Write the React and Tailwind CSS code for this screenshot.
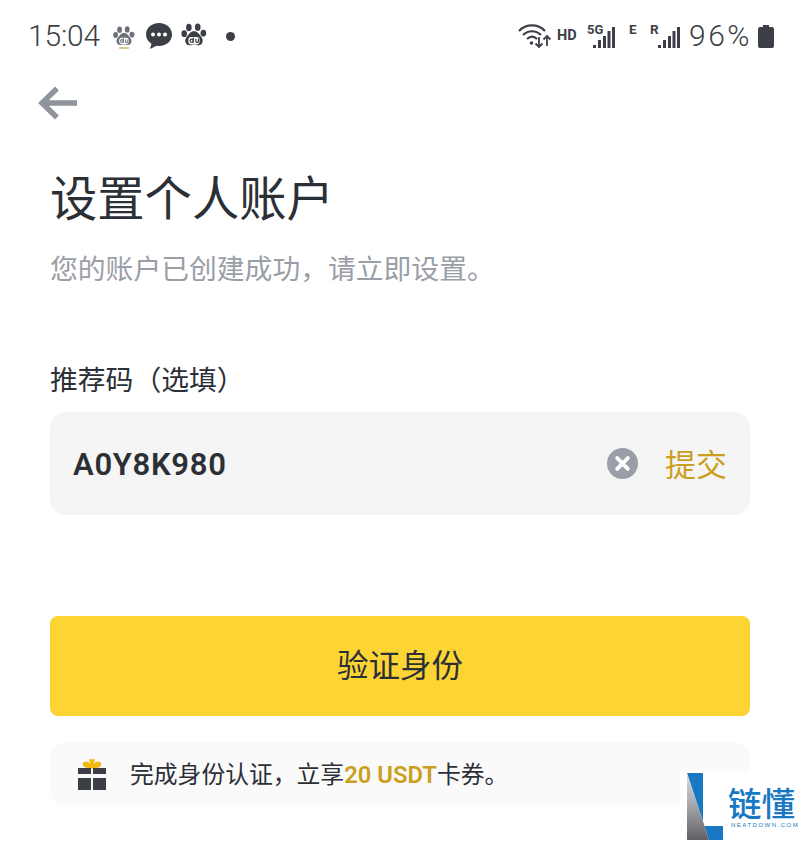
import React from "react";

const cjk = "font-['Noto_Sans_CJK_SC','Noto_Sans',sans-serif]";

function Paw({ size = 30, color = "#3c3f46", small = false }) {
    return (
        <svg width={size} height={size} viewBox="0 0 30 30" className="shrink-0">
            <ellipse cx="9.5" cy="6" rx="3" ry="4" fill={color} />
            <ellipse cx="19" cy="5.5" rx="3" ry="4" fill={color} />
            <ellipse cx="4.5" cy="12.5" rx="3" ry="3.6" fill={color} />
            <ellipse cx="25" cy="12" rx="3" ry="3.6" fill={color} />
            <path d="M15 10c4 0 5 3 7.500 5.500 3 3 2.500 9-2.500 9.500-2 .2-3.500-.6-5-.6s-3 .8-5 .6c-5-.5-5.500-6.500-2.500-9.500C10 13 11 10 15 10z" fill={color} />
            <rect x="9" y="16" width="12" height="8" rx="3" fill="#fff" />
            <circle cx="12.500" cy="20" r="1.700" fill="none" stroke={color} strokeWidth="1.300" />
            <path d="M14.200 16.500v5.500M17 18v2.500a1.400 1.400 0 0 0 2.800 0V18" fill="none" stroke={color} strokeWidth="1.300" />
            {small && <rect x="9" y="28" width="12" height="1.500" fill="#c9a24a" />}
        </svg>
    );
}

function Bars({ className = "" }) {
    return (
        <svg width="22" height="21" viewBox="0 0 22 21" className={className}>
            <rect x="0" y="18" width="3" height="3" fill="#3c3f46" />
            <rect x="5" y="13" width="3" height="8" fill="#3c3f46" />
            <rect x="10" y="9" width="3" height="12" fill="#3c3f46" />
            <rect x="14.500" y="4" width="3" height="17" fill="#3c3f46" />
            <rect x="19" y="0" width="3" height="21" fill="#3c3f46" />
        </svg>
    );
}

function StatusBar() {
    return (
        <div className="flex h-[70px] items-center justify-between pl-[28px] pr-[26px] pt-[2px] text-[#3c3f46] font-['Roboto',sans-serif]">
            <div className="flex items-center">
                <span className="text-[30px] leading-none font-[350] tracking-[-0.2px]">15:04</span>
                <div className="ml-[12px] mt-[2px] w-[24px]">
                    <Paw size={24} color="#6c7078" small />
                </div>
                <svg width="28" height="28" viewBox="0 0 28 28" className="ml-[9px]">
                    <path d="M14 1C6.500 1 1 6 1 12.500c0 4 2.200 7.300 5.500 9.300L5 27l6.500-3.200c.8.200 1.700.2 2.500.2 7.500 0 13-5 13-11.500S21.500 1 14 1z" fill="#3c3f46" />
                    <circle cx="8" cy="12.500" r="2" fill="#fff" />
                    <circle cx="14" cy="12.500" r="2" fill="#fff" />
                    <circle cx="20" cy="12.500" r="2" fill="#fff" />
                </svg>
                <div className="ml-[7px]">
                    <Paw size={28} />
                </div>
                <span className="ml-[18px] h-[9px] w-[9px] rounded-full bg-[#3c3f46]" />
            </div>
            <div className="flex items-center">
                <svg width="34" height="26" viewBox="0 0 34 26">
                    <path d="M1 8C8 .5 20 .5 27 8M5 12c5.500-5 12.500-5 18 0M9 16c3.500-3 7-3 10 0" fill="none" stroke="#3c3f46" strokeWidth="2.200" />
                    <circle cx="13.500" cy="20" r="1.800" fill="#3c3f46" />
                    <path d="M21 14v10M17.500 20.500l3.500 3.500 3.500-3.500M29 23V13M25.500 16.500l3.500-3.500 3.500 3.500" fill="none" stroke="#3c3f46" strokeWidth="1.800" />
                </svg>
                <span className="ml-[5px] mt-[1px] w-[20px] text-[14.500px] font-bold leading-none">HD</span>
                <div className="relative ml-[10px] h-[26px] w-[28px]">
                    <span className="absolute left-0 top-0 text-[13px] font-bold leading-none">5G</span>
                    <Bars className="absolute right-0 top-[4px]" />
                </div>
                <span className="ml-[14px] mb-[12px] w-[8px] text-[13.500px] font-bold leading-none">E</span>
                <span className="ml-[13px] mb-[12px] w-[9px] text-[13.500px] font-bold leading-none">R</span>
                <Bars className="mt-[3px] ml-[-1px]" />
                <span className="ml-[9px] text-[30px] font-[350] leading-none tracking-[2.500px]">96%</span>
                <svg width="16" height="23" viewBox="0 0 16 23" className="ml-[6px]">
                    <path d="M5 0h6v2h3a2 2 0 0 1 2 2v17a2 2 0 0 1-2 2H2a2 2 0 0 1-2-2V4a2 2 0 0 1 2-2h3z" fill="#3c3f46" />
                </svg>
            </div>
        </div>
    );
}

function Watermark() {
    return (
        <div className="absolute bottom-0 right-0 flex h-[70px] w-[120px] bg-white pl-[7px] pt-[1px]">
            <svg width="36" height="67" viewBox="0 0 36 67" className="shrink-0">
                <defs>
                    <linearGradient id="wedge" x1="0" y1="0" x2="0" y2="1">
                        <stop offset="0" stopColor="#dcdcde" />
                        <stop offset="0.45" stopColor="#a9abaf" />
                        <stop offset="1" stopColor="#5f6167" />
                    </linearGradient>
                </defs>
                <path d="M0 0h16v53h20v14H22z" fill="#1878c4" />
                <path d="M0 0l22 67H0z" fill="url(#wedge)" />
            </svg>
            <div className="ml-[5px] flex flex-col items-start">
                <span className={`${cjk} mt-[13px] text-[33.500px] font-medium leading-[32px] text-[#1878c4] whitespace-nowrap`}>链懂</span>
                <span className="ml-[3px] mt-[4px] font-['Liberation_Sans',sans-serif] text-[6px] leading-none tracking-[1.500px] text-[#1878c4] whitespace-nowrap">NEATDOWN.COM</span>
            </div>
        </div>
    );
}

export default function App() {
    return (
        <div className={`relative h-[842px] w-[800px] overflow-hidden bg-white ${cjk}`}>
            <StatusBar />

            <div className="pl-[38px] pt-[16px]">
                <svg width="40" height="34" viewBox="0 0 40 34" className="block">
                    <path d="M39 17H5M19 2.500L4 17l15 14.500" fill="none" stroke="#8f939b" strokeWidth="5.500" />
                </svg>
            </div>

            <div className="px-[50px]">
                <h1 className="mt-[46px] text-[47.300px] font-normal leading-[60px] text-[#2b2f36]">设置个人账户</h1>
                <p className="mt-[21px] text-[27.800px] leading-[40px] text-[#9a9ea6]">您的账户已创建成功，请立即设置。</p>

                <p className="mt-[71px] text-[27.800px] leading-[40px] text-[#2b2f36]">推荐码（选填）</p>
                <div className="mt-[14px] flex h-[103px] items-center rounded-[16px] bg-[#f5f5f5] pl-[23px] pr-[23px]">
                    <span className="mt-[3px] font-['Roboto',sans-serif] text-[31px] font-semibold tracking-[0.700px] text-[#2b2f36]">A0Y8K980</span>
                    <svg width="31" height="31" viewBox="0 0 32 32" className="ml-auto">
                        <circle cx="16" cy="16" r="16" fill="#9a9ea6" />
                        <path d="M10.500 10.500l11 11M21.500 10.500l-11 11" stroke="#fff" strokeWidth="4" strokeLinecap="round" />
                    </svg>
                    <span className="ml-[27px] mb-[3px] text-[31px] leading-none text-[#cb9f1c]">提交</span>
                </div>

                <button className="mt-[101px] flex h-[100px] w-full items-center justify-center rounded-[8px] bg-[#fcd535] pb-[4px] text-[31.500px] text-[#2b2f36]">
                    验证身份
                </button>

                <div className="mt-[26px] flex h-[65px] items-center rounded-[16px] bg-[#fafafa] pl-[28px]">
                    <svg width="28" height="31" viewBox="0 0 28 31" className="shrink-0">
                        <path d="M14 9c-2-5-6-7-8-5-2 2 1 5 8 5zM14 9c2-5 6-7 8-5 2 2-1 5-8 5zM14 8l-2-7h4z" fill="#f0b90b" stroke="#f0b90b" strokeWidth="1.500" />
                        <path d="M0 9h13v6H0zM15 9h13v6H15zM0 19h13v12H0zM15 19h13v12H15z" fill="#3c3f46" />
                    </svg>
                    <p className="ml-[24px] text-[23.800px] leading-none text-[#2b2f36] whitespace-nowrap">
                        完成身份认证，立享
                        <span className="font-['Roboto',sans-serif] font-semibold text-[#cb9f1c]">20 USDT</span>
                        卡券。
                    </p>
                </div>
            </div>

            <Watermark />
        </div>
    );
}
